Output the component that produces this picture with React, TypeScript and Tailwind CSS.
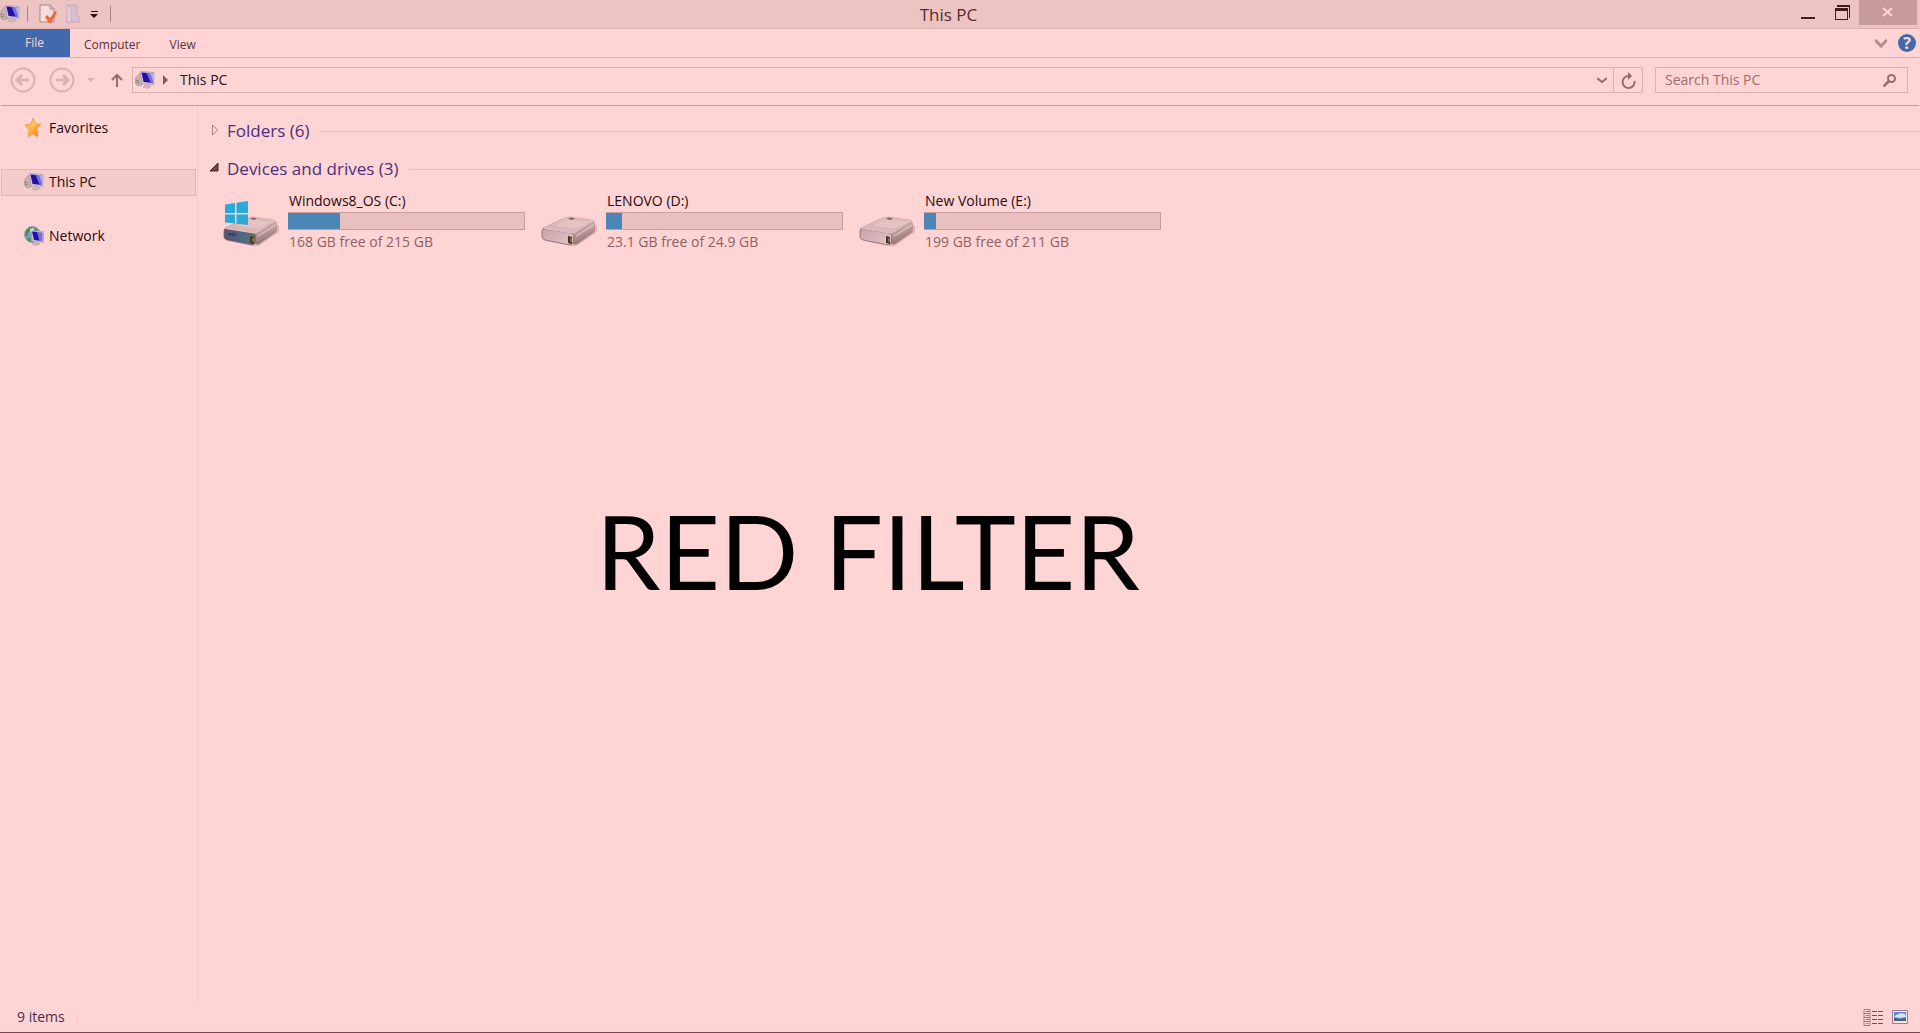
import { useState } from "react"

const drives = [
  { id: "c", name: "Windows8_OS (C:)", free: "168 GB free of 215 GB", used: 22, system: true },
  { id: "d", name: "LENOVO (D:)", free: "23.1 GB free of 24.9 GB", used: 7, system: false },
  { id: "e", name: "New Volume (E:)", free: "199 GB free of 211 GB", used: 5, system: false },
]

const PcIcon = () => (
  <svg width="20" height="18" viewBox="0 0 20 18" className="shrink-0">
    <path d="M1 6l4-4 2 1v11l-4 1-3-3z" fill="#c9b0b2" stroke="#a08688" strokeWidth=".6" />
    <path d="M1 9l3 1M1 11l3 1" stroke="#7f8a68" />
    <path d="M5.500 .5L19 1.500v12L7 12.500z" fill="#dccbe0" stroke="#a796b4" strokeWidth=".7" />
    <path d="M6.500 1.500l7 .5 4 10-9-1z" fill="#2410a4" />
    <path d="M11.500 2l6.500 .5v10l-2 0z" fill="#7870d6" />
    <path d="M15 2.300l3 .2v7z" fill="#b0aaf0" />
    <path d="M10 13.500l5 .5 1 1.500-4 2-4-1.500z" fill="#d4b8ba" stroke="#b39698" strokeWidth=".5" />
  </svg>
)

const StarIcon = () => (
  <svg width="20" height="20" viewBox="0 0 20 20" className="shrink-0">
    <defs>
      <linearGradient id="star" x1="0" y1="0" x2="1" y2="1">
        <stop offset="0" stopColor="#ffc24a" />
        <stop offset=".5" stopColor="#ffb04c" />
        <stop offset="1" stopColor="#f07a1c" />
      </linearGradient>
    </defs>
    <path d="M9 0l2.500 6H17l-4 5 1 8-5-3-5 3 1-7-4-5 6-1z" fill="url(#star)" stroke="#ee9a3c" strokeWidth=".7" />
    <path d="M9 3l2 5-7 0 4-1z" fill="#ffd67c" />
  </svg>
)

const NetworkIcon = () => (
  <svg width="20" height="20" viewBox="0 0 20 20" className="shrink-0">
    <circle cx="8.500" cy="8.500" r="8" fill="#7aa2c0" stroke="#6a80a0" strokeWidth=".6" />
    <path d="M1.500 6c1-3 4-5 7-5l-1 4-3 1-1 4-2 0zM10 1.500l4 2.500-3 1zM3 12l3 0 1 4-3-1z" fill="#4f9040" />
    <path d="M6 3l3-1 1 2-4 2z" fill="#d6e6ea" />
    <path d="M7 4.500l12.500 1v11L8.500 15.500z" fill="#dccbe0" stroke="#a796b4" strokeWidth=".7" />
    <path d="M8 5.500l6 .5 3 9-7-1z" fill="#2410a4" />
    <path d="M13 6l5.500 .5v9l-3-.5z" fill="#7870d6" />
    <path d="M10 16.500l5 .5 1 1-4 1.500-4-1.500z" fill="#d4b8ba" stroke="#b39698" strokeWidth=".5" />
  </svg>
)

const DriveIcon = ({ system }: { system: boolean }) => (
  <svg width="58" height="50" viewBox="0 0 58 50" className="shrink-0">
    <defs>
      <linearGradient id="top" x1="0" y1="1" x2="1" y2="0">
        <stop offset="0" stopColor="#d2aeb0" />
        <stop offset="1" stopColor="#eccaca" />
      </linearGradient>
      <linearGradient id="side" x1="0" y1="0" x2=".4" y2="1">
        <stop offset="0" stopColor="#f0d0d0" />
        <stop offset=".5" stopColor="#c09b9c" />
        <stop offset="1" stopColor="#8c6c6e" />
      </linearGradient>
      <linearGradient id="face" x1="0" y1="0" x2="1" y2="1">
        <stop offset="0" stopColor="#c9a2a8" />
        <stop offset="1" stopColor="#e6c4ca" />
      </linearGradient>
      <linearGradient id="lcd" x1="0" y1="0" x2="1" y2="0">
        <stop offset="0" stopColor="#5a5068" />
        <stop offset=".6" stopColor="#4a6a86" />
        <stop offset="1" stopColor="#6c6c5c" />
      </linearGradient>
    </defs>
    <path d="M6 44l26 5q3 1 6-1l19-13v-7L33 45z" fill="#dfb5b5" />
    <path d="M3 31L22 22q4-2 9-2l21 3q3 1 2 3L35 37q-2 1-4 0L3 33z" fill="url(#top)" stroke="#c09d9e" strokeWidth=".6" />
    <path d="M13 29l13-6q3-1 6-1l16 2q3 1 0 3l-9 4q-3 1-6 1z" fill="#e6c2c3" stroke="#cdabac" strokeWidth=".6" />
    <path d="M34 37l19-12q2 1 2 4l-1 6-17 12q-3 1-4-1z" fill="url(#side)" stroke="#a58586" strokeWidth=".5" />
    <path d="M36 39l18-11" stroke="#f2d8d8" strokeWidth=".8" />
    <path d="M2 34q0-3 3-2l26 4q3 1 3 3l-1 7q-1 2-3 2L5 43q-3-1-3-3z" fill={system ? "url(#lcd)" : "url(#face)"} stroke="#86666a" strokeWidth=".8" />
    <path d="M4 31.500l28 4.500" stroke="#f2d8d8" strokeWidth=".8" />
    <path d="M28 39l4 1v7l-4-1z" fill="#4a3228" />
    <path d="M31 41v4" stroke="#b0ac60" />
    {system && <path d="M7 36l1 3 1-3 2 3 1-3 2 3" fill="none" stroke="#33236e" strokeWidth=".8" />}
    <path d="M28 21.500l3-1 4 1-3 1.500z" fill="#7f6163" />
    {system && <path d="M3 8l23-3v22L3 25z" fill="#f5d3d6" />}
    {system && <path d="M3 7.500l10-1.500v10H3zM14.500 5.800L26 4v12H14.500zM3 17.500h10v9L3 25.500zM14.500 17.500H26v10.500l-11.500-1.300z" fill="#2caad6" />}
  </svg>
)

const NavArrow = ({ flip = false }: { flip?: boolean }) => (
  <svg width="26" height="26" viewBox="0 0 26 26" fill="none" stroke="#dcb1b1">
    <circle cx="13" cy="13" r="11.500" strokeWidth="2" />
    {flip ? (
      <path d="M7 13h12M14 8l5 5-5 5" strokeWidth="3" />
    ) : (
      <path d="M19 13H7M12 8l-5 5 5 5" strokeWidth="3" />
    )}
  </svg>
)

const TitleBar = () => (
  <header className="flex h-[29px] items-start border-b border-[#deb1b1] bg-[#edc4c4]">
    <div className="flex h-7 flex-1 items-center">
      <PcIcon />
      <span className="ml-[7px] h-4 w-px bg-[#a98485]" />
      <button aria-label="Properties" className="ml-[11px]">
        <svg width="19" height="20" viewBox="0 0 19 20">
          <path d="M1 1h10l4 4v13H1z" fill="#fbdcdc" stroke="#a88587" />
          <path d="M11 1v4h4" fill="none" stroke="#a88587" />
          <path d="M6 13l2-2 3 3 5-7 2 1-6 11-2 0z" fill="#f0663c" />
        </svg>
      </button>
      <button aria-label="New folder" className="ml-2">
        <svg width="14" height="20" viewBox="0 0 14 20">
          <path d="M1 1h10v11l3 1v5H4l-3 1z" fill="#d6bfd0" stroke="#bfa6ba" strokeWidth=".8" />
          <path d="M1 1l4 3v14l-2 1-2-1z" fill="#e4cedb" stroke="#c0a5b6" strokeWidth=".6" />
        </svg>
      </button>
      <button aria-label="Customize quick access" className="ml-[10px]">
        <svg width="9" height="8" viewBox="0 0 9 8" fill="#2d0d10">
          <path d="M1 1h7v1H1zM0 4h8L4 8z" />
        </svg>
      </button>
      <span className="ml-[11px] h-4 w-px bg-[#a98485]" />
    </div>
    <h1 className="pr-5 text-[17px] leading-[30px] text-[#5a2b2e]">This PC</h1>
    <div className="flex flex-1 justify-end pr-[3px]">
      <button aria-label="Minimize" className="flex h-[25px] w-[34px] items-center justify-center">
        <svg width="14" height="14" viewBox="0 0 14 14">
          <path d="M0 11h14v2H0z" fill="#471a1e" />
        </svg>
      </button>
      <button aria-label="Restore" className="flex h-[25px] w-[34px] items-center justify-center">
        <svg width="15" height="16" viewBox="0 0 15 16" fill="#471a1e">
          <path d="M2 0h13v13h-1V2H2z" />
          <path d="M0 3h13v12H0zM1 6v8h11V6z" fillRule="evenodd" />
        </svg>
      </button>
      <button aria-label="Close" className="flex h-[25px] w-[58px] items-center justify-center bg-[#c79b9b] pb-0.5 pr-0.5">
        <svg width="11" height="10" viewBox="0 0 11 10">
          <path d="M1 1l9 8M10 1L1 9" stroke="#fbd9d9" strokeWidth="2" />
        </svg>
      </button>
    </div>
  </header>
)

const Ribbon = () => (
  <nav className="flex h-[29px] items-start border-b border-[#deb1b1] text-xs text-[#5c3338]">
    <button className="h-7 w-[70px] bg-[#4169ac] pr-px text-[#f6d6dc]">File</button>
    <button className="h-7 px-[14px] pt-1">Computer</button>
    <button className="h-7 px-[15px] pt-1">View</button>
    <div className="ml-auto flex h-7 items-center gap-[11px] pr-1">
      <button aria-label="Expand ribbon">
        <svg width="12" height="9" viewBox="0 0 12 9" fill="none">
          <path d="M0 1l6 6 6-6" stroke="#b58c8c" strokeWidth="3" />
        </svg>
      </button>
      <button aria-label="Help" className="flex size-[18px] items-center justify-center rounded-full bg-[#4169ac] text-base font-bold leading-none text-[#fbd9dc]">
        ?
      </button>
    </div>
  </nav>
)

const AddressRow = () => {
  const [query, setQuery] = useState("")

  return (
    <div className="mx-px flex h-12 items-center border-b border-[#c99c9d] pb-[3px] pl-[9px] pr-[11px]">
      <button aria-label="Back"><NavArrow /></button>
      <button aria-label="Forward" className="ml-[13px]"><NavArrow flip /></button>
      <button aria-label="Recent locations" className="ml-3">
        <svg width="8" height="5" viewBox="0 0 8 5"><path d="M0 0h8L4 4z" fill="#dcb1b1" /></svg>
      </button>
      <button aria-label="Up" className="ml-4">
        <svg width="12" height="14" viewBox="0 0 12 14" fill="none" stroke="#966c6e" strokeWidth="2">
          <path d="M6 14V2M1 7l5-5 5 5" />
        </svg>
      </button>
      <div className="ml-[9px] flex h-[26px] flex-1 items-center border border-[#deb1b1] pl-[2px] text-sm text-[#2f0f12]">
        <PcIcon />
        <svg width="6" height="10" viewBox="0 0 6 10" className="ml-2"><path d="M0 0l5 5-5 5z" fill="#82585a" /></svg>
        <span className="ml-[11px] flex-1">This PC</span>
        <button aria-label="Previous locations" className="mr-[6px]">
          <svg width="10" height="7" viewBox="0 0 10 7" fill="none">
            <path d="M0 1l5 4 5-4" stroke="#966c6e" strokeWidth="2" />
          </svg>
        </button>
        <button aria-label="Refresh" className="flex h-6 w-[29px] items-center justify-center border-l border-[#deb1b1]">
          <svg width="15" height="17" viewBox="0 0 15 17" fill="none">
            <path d="M8 4A6 6 0 1 0 13.500 9" stroke="#966c6e" strokeWidth="2" />
            <path d="M7 0l4 4-4 4z" fill="#966c6e" />
          </svg>
        </button>
      </div>
      <div className="ml-3 flex h-[26px] w-[253px] items-center border border-[#deb1b1] pl-[9px] pr-[11px]">
        <input
          aria-label="Search This PC"
          placeholder="Search This PC"
          value={query}
          onChange={(e) => setQuery(e.target.value)}
          className="min-w-0 flex-1 bg-transparent text-sm text-[#2f0f12] outline-none placeholder:text-[#9b6e70]"
        />
        <svg width="13" height="13" viewBox="0 0 13 13" fill="none" stroke="#966c6e">
          <circle cx="8.500" cy="4.500" r="3.500" strokeWidth="2" />
          <path d="M6 7l-5.500 5.500" strokeWidth="2.500" />
        </svg>
      </div>
    </div>
  )
}

const places = [
  { id: "favorites", name: "Favorites", icon: StarIcon, active: false },
  { id: "pc", name: "This PC", icon: PcIcon, active: true },
  { id: "network", name: "Network", icon: NetworkIcon, active: false },
]

const Sidebar = () => (
  <aside className="flex w-[198px] shrink-0 flex-col gap-[27px] border-r border-[#f6cbcb] pl-px pr-[1px] pt-[9px]">
    {places.map((place) => (
      <a
        key={place.id}
        href={`#${place.id}`}
        className={`flex h-[27px] items-center gap-[5px] border pb-px pl-[22px] text-sm text-[#2a0a0e] ${
          place.active ? "border-[#e2b7b7] bg-[#f5cbcb]" : "border-transparent"
        }`}
      >
        <place.icon />
        {place.name}
      </a>
    ))}
  </aside>
)

const GroupHeader = ({ label, open }: { label: string; open: boolean }) => (
  <button aria-expanded={open} className="flex h-[38px] w-full items-center pl-3">
    <svg width="10" height="14" viewBox="0 0 10 14">
      {open ? (
        <path d="M8 1v8H0z" fill="#7a484b" stroke="#4c2226" />
      ) : (
        <path d="M2.500 1l5 5-5 5z" fill="none" stroke="#a87e80" />
      )}
    </svg>
    <span className="ml-[7px] text-[17px] text-[#49307e]">{label}</span>
    <span className="ml-[10px] h-px flex-1 bg-[#ebbfc0]" />
  </button>
)

export default function App() {
  return (
    <div className="flex min-h-screen flex-col border-b border-[#7b4253] bg-[#ffd4d4] font-['Open_Sans',sans-serif]">
      <TitleBar />
      <Ribbon />
      <AddressRow />
      <div className="flex flex-1">
        <Sidebar />
        <main className="flex-1 pt-[6px]">
          <GroupHeader label="Folders (6)" open={false} />
          <GroupHeader label="Devices and drives (3)" open />
          <ul className="flex flex-wrap pl-6 pt-[2px]">
            {drives.map((drive) => (
              <li key={drive.id} className="flex w-[318px] items-center">
                <DriveIcon system={drive.system} />
                <div className="ml-2 w-[237px]">
                  <p className="pl-px text-sm leading-[22px] text-[#2a0a0e]">{drive.name}</p>
                  <div className="h-[18px] border border-[#c99c9f] bg-[#e9bfc0]">
                    <div className="-ml-px h-full bg-[#4b86b6]" style={{ width: `${drive.used}%` }} />
                  </div>
                  <p className="pl-px text-sm leading-6 text-[#8e6264]">{drive.free}</p>
                </div>
              </li>
            ))}
          </ul>
          <p className="mt-[232px] pl-[398px] font-['Lato',sans-serif] text-[103px] leading-[128px] text-black">RED FILTER</p>
        </main>
      </div>
      <footer className="flex h-[30px] items-center pl-[17px] pr-3 text-sm text-[#4a2c50]">
        <span>9 items</span>
        <span className="ml-3 h-[13px] w-px bg-[#f3c8c8]" />
        <button aria-label="Details view" className="ml-auto">
          <svg width="20" height="17" viewBox="0 0 20 17" fill="none">
            <path d="M1 .5h6v16H1zM1 4.500h6M1 8.500h6M1 12.500h6" stroke="#a07a90" />
            <path d="M3 2.500h3" stroke="#7a7a4a" />
            <path d="M3 6.500h3" stroke="#f0502c" />
            <path d="M3 10.500h3" stroke="#4a6ad0" />
            <path d="M3 14.500h3" stroke="#8ab030" />
            <path d="M9 2.500h5M15 2.500h5M9 6.500h5M15 6.500h5M9 10.500h5M15 10.500h5M9 14.500h5M15 14.500h5" stroke="#7c4a64" />
          </svg>
        </button>
        <button aria-label="Large icons view" className="ml-[9px]">
          <svg width="16" height="15" viewBox="0 0 16 15">
            <path d="M.5 .5h15v13H.5z" fill="#fbe0ea" stroke="#a07a98" />
            <path d="M2 2h12v9H2z" fill="#5a8ad8" />
            <path d="M4 5l5-2 4 1 1 3-6 1-6-1z" fill="#d8e4f4" />
            <path d="M2 8l5 1 7-1v3H2z" fill="#4a6474" />
          </svg>
        </button>
      </footer>
    </div>
  )
}
